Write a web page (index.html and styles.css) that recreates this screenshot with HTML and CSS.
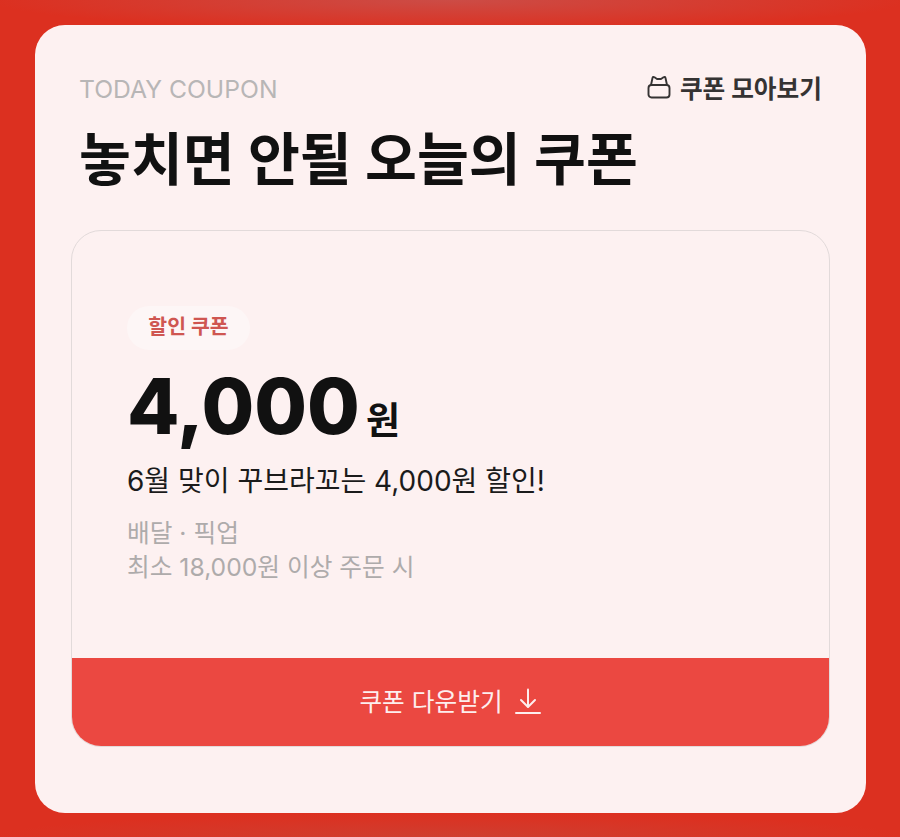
FILE: index.html
```html
<!DOCTYPE html>
<html lang="ko">
<head>
    <meta charset="UTF-8">
    <meta name="viewport" content="width=device-width, initial-scale=1.0">
    <title>Today Coupon</title>
    <link rel="stylesheet" href="styles.css">
</head>
<body>
    <section class="panel">
        <div class="panel-top">
            <span class="eyebrow">TODAY COUPON</span>
            <a class="more-link" href="#">
                <svg class="more-icon" width="24" height="24" viewBox="0 0 24 24" fill="none" stroke="currentColor" stroke-width="1.9" stroke-linejoin="round" stroke-linecap="round">
                    <path d="M4 10l1.500-7c.3-1.200 1-1.300 2-.7L10 4h4l2.500-1.700c1-.6 1.700-.5 2 .7L20 10"/>
                    <rect x="1.500" y="10" width="21" height="12.500" rx="3"/>
                </svg>
                <span>쿠폰 모아보기</span>
            </a>
        </div>
        <h1 class="panel-title">놓치면 안될 오늘의 쿠폰</h1>

        <div class="coupon">
            <div class="coupon-body">
                <span class="tag">할인 쿠폰</span>
                <div class="price"><strong>4,000</strong><span>원</span></div>
                <p class="coupon-desc">6월 맞이 꾸브라꼬는 4,000원 할인!</p>
                <p class="coupon-note">배달 · 픽업</p>
                <p class="coupon-note">최소 18,000원 이상 주문 시</p>
            </div>
            <button class="download" type="button">
                <span class="download-label">쿠폰 다운받기</span>
                <svg width="28" height="28" viewBox="0 0 28 28" fill="none" stroke="currentColor" stroke-width="2" stroke-linecap="round" stroke-linejoin="round">
                    <path d="M14 1.500v17"/>
                    <path d="M7 12l7 7 7-7"/>
                    <path d="M2 25h24"/>
                </svg>
            </button>
        </div>
    </section>
</body>
</html>
```

FILE: styles.css
```css
* {
    box-sizing: border-box;
}
html, body {
    height: 100%;
}
body {
    margin: 0;
    padding: 25px 34px 24px 35px;
    font-family: Inter, "Noto Sans CJK KR", sans-serif;
    background-color: #dc3020;
    background-image:
        radial-gradient(ellipse 460px 30px at 50% 0, #cc4c46, rgba(204, 76, 70, 0)),
        radial-gradient(ellipse 460px 24px at 50% 100%, #cf3e30, rgba(207, 62, 48, 0));
}
.panel {
    height: 100%;
    padding: 45px 36px 0 36px;
    background: #fdf1f1;
    border-radius: 30px;
}
.panel-top {
    display: flex;
    justify-content: space-between;
    align-items: center;
    height: 38px;
    padding: 0 8px;
}
.eyebrow {
    font-size: 24.7px;
    color: #b8b6b6;
}
.more-link {
    display: flex;
    align-items: center;
    gap: 9px;
    padding: 0 0 4px;
    font-size: 24.7px;
    font-weight: 700;
    color: #353333;
    text-decoration: none;
}
.more-icon {
    flex: none;
}
.panel-title {
    margin: 16px 0 34px;
    padding: 0 8px;
    font-size: 56.4px;
    line-height: 72px;
    font-weight: 700;
    color: #111;
}
.coupon {
    height: 517px;
    display: flex;
    flex-direction: column;
    border: 1px solid #e2dada;
    border-radius: 30px;
    overflow: hidden;
}
.coupon-body {
    flex: 1;
    padding: 75px 55px 0;
}
.tag {
    display: block;
    width: 123px;
    height: 44px;
    line-height: 42px;
    text-align: center;
    font-size: 20.5px;
    font-weight: 700;
    color: #cf5651;
    background: #fdf6f6;
    border-radius: 22px;
}
.price {
    display: flex;
    align-items: baseline;
    gap: 6px;
    height: 82px;
    margin-top: 15px;
    color: #111;
}
.price strong {
    font-size: 76.3px;
    line-height: 82px;
    font-weight: 800;
}
.price span {
    font-size: 37px;
    font-weight: 700;
}
.coupon-desc {
    margin: 15px 0 16px;
    font-size: 28px;
    line-height: 38px;
    color: #1b1b1b;
}
.coupon-note {
    margin: 0;
    font-size: 24.7px;
    line-height: 34px;
    color: #aeabab;
}
.download {
    display: flex;
    justify-content: center;
    align-items: center;
    gap: 11px;
    height: 88px;
    border: 0;
    background: #eb4841;
    color: #fdeeee;
    font-family: inherit;
    font-size: 24.7px;
}
.download-label {
    padding-bottom: 4px;
}
```
